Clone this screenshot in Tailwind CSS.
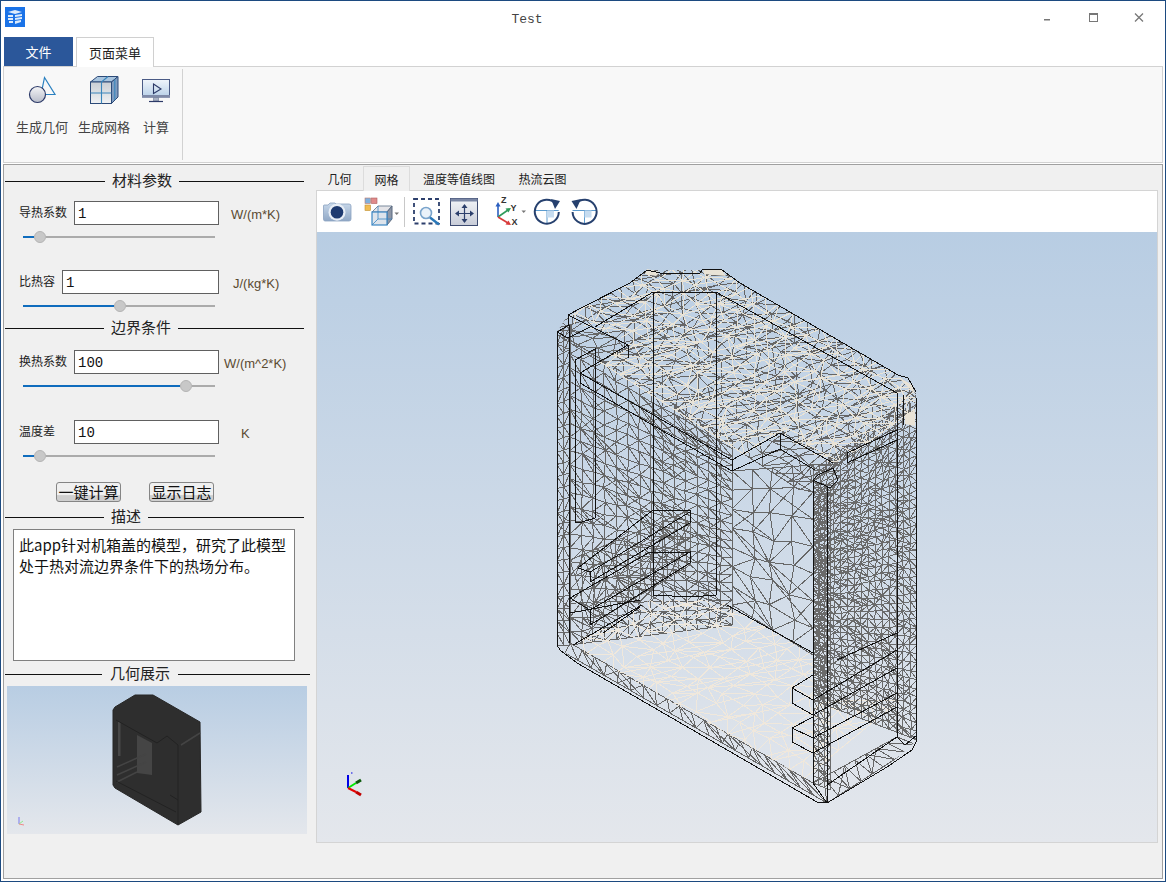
<!DOCTYPE html>
<html lang="zh">
<head>
    <meta charset="UTF-8">
    <title>Test</title>
    <script src="https://cdn.jsdelivr.net/npm/@tailwindcss/browser@4"></script>
</head>
<body class="m-0 bg-white">
<div class="w-[1166px] h-[882px] overflow-hidden border border-[#1c4a80] bg-white flex flex-col font-['Noto_Sans_CJK_SC','Noto_Sans',sans-serif] text-[#222]">

    <!-- title bar -->
    <div class="h-[36px] shrink-0 flex items-center">
        <svg class="w-[20px] h-[20px] ml-[4px] mb-[4px]" viewBox="0 0 20 20">
            <rect width="20" height="20" fill="#1a73e8"/>
            <path d="M3 5 L10 3 L17 5 L10 7 Z M3 8 h5 v2 h-5 Z M10 8 L17 7 v2 L10 10 Z M3 11 h5 v2 h-5 Z M10 11 L17 10 v2 L10 13 Z M4 14 h4 v2 h-4 Z M10 14 L16 13 v2 L10 17 Z" fill="#dcebfb"/>
        </svg>
        <div class="flex-1 text-center pl-[5px] pt-[2px] font-['Liberation_Mono',monospace] text-[13px] text-[#444]">Test</div>
        <div class="flex items-center">
            <svg class="w-[46px] h-[20px]" viewBox="0 0 46 20"><rect x="20" y="10" width="6" height="1.5" fill="#777"/></svg>
            <svg class="w-[46px] h-[20px]" viewBox="0 0 46 20"><rect x="19.5" y="4.5" width="8" height="8" fill="none" stroke="#777"/><rect x="19" y="4" width="9" height="2" fill="#777"/></svg>
            <svg class="w-[46px] h-[20px] mr-[3px]" viewBox="0 0 46 20"><path d="M19 4.5 L27 12.5 M27 4.5 L19 12.5" stroke="#777" stroke-width="1.3"/></svg>
        </div>
    </div>

    <!-- ribbon tabs -->
    <div class="h-[29px] shrink-0 flex pl-[3px] text-[13px]">
        <div class="w-[69px] h-[29px] bg-[#2b579a] text-white flex items-center justify-center">文件</div>
        <div class="w-[78px] h-[30px] ml-[3px] bg-white border border-b-0 border-[#d0d0d0] flex items-center justify-center relative z-10">页面菜单</div>
    </div>

    <!-- ribbon -->
    <div class="h-[97px] shrink-0 ml-[2px] mr-[2px] border border-[#d2d2d2] bg-[#f8f8f8] flex text-[13px] text-[#444]">
        <div class="w-[60px] ml-[8px] mt-[5px] flex flex-col items-center">
            <svg class="w-[60px] h-[36px]" viewBox="12 72 60 36">
                <defs>
                    <linearGradient id="ballFill" x1="0" y1="0" x2="0" y2="1"><stop offset="0" stop-color="#f4f4f6"/><stop offset="1" stop-color="#b8bdca"/></linearGradient>
                    <linearGradient id="cubeFill" x1="0" y1="0" x2="0" y2="1"><stop offset="0" stop-color="#c9ced4"/><stop offset="1" stop-color="#f0f2f4"/></linearGradient>
                    <linearGradient id="screenFill" x1="0" y1="0" x2="0" y2="1"><stop offset="0" stop-color="#f0f5fb"/><stop offset="1" stop-color="#b8d0e8"/></linearGradient>
                    <linearGradient id="camFill" x1="0" y1="0" x2="0" y2="1"><stop offset="0" stop-color="#c8d8ea"/><stop offset="1" stop-color="#90a8c6"/></linearGradient>
                    <linearGradient id="fitFill" x1="0" y1="0" x2="0" y2="1"><stop offset="0" stop-color="#f2f4f8"/><stop offset="1" stop-color="#c8ccd8"/></linearGradient>
                </defs>
                <path d="M44.5 77.5 L55 94.5 L41 94.5 Z" fill="#f8f8f8" stroke="#2a80c0" stroke-width="1.2"/>
                <circle cx="37.5" cy="94.5" r="8" fill="url(#ballFill)" stroke="#2c3a68" stroke-width="1.2"/>
            </svg>
            <div class="mt-[10px] leading-[18px] whitespace-nowrap">生成几何</div>
        </div>
        <div class="w-[60px] ml-[2px] mt-[5px] flex flex-col items-center">
            <svg class="w-[60px] h-[36px]" viewBox="74 72 60 36">
                <path d="M90.5 82 L97.5 76.5 L118 76.5 L111.5 82 Z" fill="#a8c4de" stroke="#2c4a78"/>
                <path d="M111.5 82 L118 76.5 L118 97 L111.5 103.5 Z" fill="#7e9cc0" stroke="#2c4a78"/>
                <rect x="90.5" y="82" width="21" height="21.5" fill="url(#cubeFill)" stroke="#2c4a78"/>
                <path d="M101.5 82 V103.5 M90.5 93 H111.5 M101.5 82 L108 76.5 M114.8 79.5 V100" stroke="#3a86bc" stroke-width="1.1" fill="none"/>
            </svg>
            <div class="mt-[10px] leading-[18px] whitespace-nowrap">生成网格</div>
        </div>
        <div class="w-[40px] ml-[2px] mt-[5px] flex flex-col items-center">
            <svg class="w-[40px] h-[36px]" viewBox="136 72 40 36">
                <rect x="142.5" y="79.5" width="27" height="17.5" fill="url(#screenFill)" stroke="#4a5a85"/>
                <rect x="142" y="95" width="28" height="2.5" fill="#7f8aa8"/>
                <path d="M153.5 84 L161 89 L153.5 93.5 Z" fill="none" stroke="#2c3a68" stroke-width="1.1"/>
                <path d="M153.5 97.5 H158.5 V101 H153.5 Z" fill="#aab2c4" stroke="#6a7590" stroke-width="0.6"/>
                <path d="M149 101.5 H163" stroke="#2c3a68" stroke-width="1.2"/>
            </svg>
            <div class="mt-[10px] leading-[18px] whitespace-nowrap">计算</div>
        </div>
        <div class="w-px ml-[6px] my-[2px] bg-[#d2d2d2]"></div>
    </div>

    <!-- main frame -->
    <div class="h-[715px] shrink-0 mt-px ml-[2px] mr-[2px] border border-[#a0a0a0] bg-[#f0f0f0] flex">

        <!-- left column -->
        <div class="w-[312px] shrink-0 pt-[7px] text-[#222]">
            <div class="h-[18px] flex items-center pl-px text-[15px]">
                <div class="w-[100px] h-px bg-[#111]"></div>
                <div class="w-[74px] pb-[2px] text-center whitespace-nowrap">材料参数</div>
                <div class="w-[125px] h-px bg-[#111]"></div>
            </div>
            <div class="mt-[11px] h-[24px] flex items-center pl-[15px] text-[12px]">
                <div class="w-[55px] pb-[2px] whitespace-nowrap">导热系数</div>
                <input class="w-[145px] h-[24px] border border-[#606060] bg-white px-[3px] pt-[2px] font-['Liberation_Mono',monospace] text-[14px] text-[#111]" value="1">
                <div class="ml-[12px] pt-[4px] font-['Liberation_Sans',sans-serif] text-[13px] text-[#5a4a30]">W/(m*K)</div>
            </div>
            <div class="mt-[6px] h-[12px] ml-[19px] w-[192px] flex items-center">
                <div class="w-[11px] h-[2px] bg-[#0f6cbd]"></div>
                <div class="w-[12px] h-[12px] rounded-full bg-[#c8c8c8] border border-[#b4b4b4] shrink-0"></div>
                <div class="flex-1 h-[2px] bg-[#ababab]"></div>
            </div>

            <div class="mt-[27px] h-[24px] flex items-center pl-[15px] text-[12px]">
                <div class="w-[43px] pb-[2px] whitespace-nowrap">比热容</div>
                <input class="w-[157px] h-[24px] border border-[#606060] bg-white px-[3px] pt-[2px] font-['Liberation_Mono',monospace] text-[14px] text-[#111]" value="1">
                <div class="ml-[14px] pt-[4px] font-['Liberation_Sans',sans-serif] text-[13px] text-[#5a4a30]">J/(kg*K)</div>
            </div>
            <div class="mt-[6px] h-[12px] ml-[19px] w-[192px] flex items-center">
                <div class="w-[91px] h-[2px] bg-[#0f6cbd]"></div>
                <div class="w-[12px] h-[12px] rounded-full bg-[#c8c8c8] border border-[#b4b4b4] shrink-0"></div>
                <div class="flex-1 h-[2px] bg-[#ababab]"></div>
            </div>

            <div class="mt-[7px] h-[18px] flex items-center pl-px text-[15px]">
                <div class="w-[99px] h-px bg-[#111]"></div>
                <div class="w-[74px] pb-[2px] text-center whitespace-nowrap">边界条件</div>
                <div class="w-[126px] h-px bg-[#111]"></div>
            </div>
            <div class="mt-[13px] h-[24px] flex items-center pl-[15px] text-[12px]">
                <div class="w-[55px] pb-[2px] whitespace-nowrap">换热系数</div>
                <input class="w-[145px] h-[24px] border border-[#606060] bg-white px-[3px] pt-[2px] font-['Liberation_Mono',monospace] text-[14px] text-[#111]" value="100">
                <div class="ml-[5px] pt-[4px] font-['Liberation_Sans',sans-serif] text-[13px] text-[#5a4a30] whitespace-nowrap">W/(m^2*K)</div>
            </div>
            <div class="mt-[6px] h-[12px] ml-[19px] w-[192px] flex items-center">
                <div class="w-[157px] h-[2px] bg-[#0f6cbd]"></div>
                <div class="w-[12px] h-[12px] rounded-full bg-[#c8c8c8] border border-[#b4b4b4] shrink-0"></div>
                <div class="flex-1 h-[2px] bg-[#ababab]"></div>
            </div>

            <div class="mt-[28px] h-[24px] flex items-center pl-[15px] text-[12px]">
                <div class="w-[55px] pb-[2px] whitespace-nowrap">温度差</div>
                <input class="w-[145px] h-[24px] border border-[#606060] bg-white px-[3px] pt-[2px] font-['Liberation_Mono',monospace] text-[14px] text-[#111]" value="10">
                <div class="ml-[22px] pt-[4px] font-['Liberation_Sans',sans-serif] text-[13px] text-[#5a4a30]">K</div>
            </div>
            <div class="mt-[6px] h-[12px] ml-[19px] w-[192px] flex items-center">
                <div class="w-[11px] h-[2px] bg-[#0f6cbd]"></div>
                <div class="w-[12px] h-[12px] rounded-full bg-[#c8c8c8] border border-[#b4b4b4] shrink-0"></div>
                <div class="flex-1 h-[2px] bg-[#ababab]"></div>
            </div>

            <div class="mt-[20px] h-[20px] flex pl-[52px] text-[15px] text-[#111]">
                <button class="w-[65px] h-[20px] rounded-[3px] border border-[#858585] bg-linear-to-b from-[#f0f0f0] from-[65%] to-[#cfcfcf] to-[70%] leading-[18px] whitespace-nowrap">一键计算</button>
                <button class="w-[65px] h-[20px] ml-[28px] rounded-[3px] border border-[#858585] bg-linear-to-b from-[#f0f0f0] from-[65%] to-[#cfcfcf] to-[70%] leading-[18px] whitespace-nowrap">显示日志</button>
            </div>

            <div class="mt-[6px] h-[18px] flex items-center pl-px text-[15px]">
                <div class="w-[99px] h-px bg-[#111]"></div>
                <div class="w-[44px] pb-[2px] text-center whitespace-nowrap">描述</div>
                <div class="w-[156px] h-px bg-[#111]"></div>
            </div>
            <textarea class="block mt-[3px] ml-[9px] w-[282px] h-[132px] resize-none overflow-hidden border border-[#808080] bg-white px-[5px] pt-[4px] text-[15px] leading-[21px] text-[#111]">此app针对机箱盖的模型，研究了此模型处于热对流边界条件下的热场分布。</textarea>

            <div class="mt-[4px] h-[18px] flex items-center pl-px text-[15px]">
                <div class="w-[97px] h-px bg-[#111]"></div>
                <div class="w-[76px] pb-[2px] text-center whitespace-nowrap">几何展示</div>
                <div class="w-[132px] h-px bg-[#111]"></div>
            </div>
            <div class="mt-[3px] ml-[3px] w-[300px] h-[148px] bg-linear-to-b from-[#b8cde3] to-[#e4e7ec]">
                <svg class="block w-[300px] h-[148px]" viewBox="7 686 300 148">
                    <path d="M115 707 L135 695 L153 695 L200 722 L201 812 L178 825 L115 788 L113 785 L113 710 Z" fill="#2e2e2e" stroke="#262626"/>
                    <path d="M137 735 L152 743 L152 775 L137 773 Z" fill="#454545"/>
                    <path d="M118 722 H120.5 V756 H118 Z" fill="#484848"/>
                    <path d="M117 767 L146 754 M117 775 L146 762 M117 782 L137 772 M181 745 L200 733" stroke="#444" stroke-width="1.5" fill="none"/>
                    <path d="M116 720 L157 743 L167 736 L178 745 M178 745 V825 M116 781 L176 812 M170 795 L178 800" stroke="#222" fill="none"/>
                    <path d="M19 817 V824" stroke="#8a8aee" stroke-width="1.2" fill="none"/>
                    <path d="M19 824 L23 821" stroke="#8aee8a" stroke-width="1" fill="none"/>
                    <path d="M19 824 L24 825" stroke="#ee8a8a" stroke-width="1" fill="none"/>
                </svg>
            </div>
        </div>

        <!-- right column -->
        <div class="w-[842px] shrink-0 flex flex-col">
            <div class="h-[25px] shrink-0 flex items-end text-[12px] text-[#222]">
                <div class="w-[47px] h-[22px] flex items-center justify-center">几何</div>
                <div class="w-[47px] h-[25px] -mb-px relative z-10 bg-[#f0f0f0] border border-b-0 border-[#dcdcdc] flex items-center justify-center pt-[1px]">网格</div>
                <div class="w-[98px] h-[22px] flex items-center justify-center whitespace-nowrap">温度等值线图</div>
                <div class="w-[69px] h-[22px] flex items-center justify-center whitespace-nowrap">热流云图</div>
            </div>
            <div class="h-[653px] shrink-0 border border-[#d4d4d4] flex flex-col">
                <!-- toolbar -->
                <div class="h-[41px] shrink-0 bg-white flex items-center pl-[5px]">
                    <svg class="w-[30px] h-[26px]" viewBox="322 200 30 26">
                        <path d="M324 206 H328 L330 204 H335 L336 205 H349 Q351 205 351 207 V220 Q351 222 349 222 H325 Q323.5 222 323.5 220 V207 Q323.5 206 324 206 Z" fill="url(#camFill)" stroke="#8ba2c0" stroke-width="0.8"/>
                        <circle cx="337" cy="213.3" r="8.5" fill="#e8eef6"/>
                        <circle cx="337" cy="213.3" r="6.3" fill="#1e3a70"/>
                    </svg>
                    <svg class="w-[38px] h-[32px] ml-[11px]" viewBox="364 196 38 32">
                        <rect x="366" y="198" width="5.5" height="5.5" fill="#7fb0de" stroke="#c07a6a" stroke-width="0.6"/>
                        <rect x="372.5" y="198" width="5.5" height="5.5" fill="#e08a8a" stroke="#b06060" stroke-width="0.6"/>
                        <rect x="366" y="205" width="5.5" height="5.5" fill="#f2bc52" stroke="#c09030" stroke-width="0.6"/>
                        <path d="M379 206 H393 L388 212 H373 Z" fill="#e4e4e8" stroke="#7a8a9c"/>
                        <path d="M393 206 V219 L388 225 V212 Z" fill="#8d96a6" stroke="#5a6a80"/>
                        <rect x="373" y="212" width="15" height="13" fill="#dde4ec" stroke="#3a86c4" stroke-width="1.2"/>
                        <path d="M379 206 V219 H393 M379 219 L373 225" fill="none" stroke="#3a86c4" stroke-width="0.8"/>
                        <path d="M395.5 212.5 H400 L397.7 215 Z" fill="#777"/>
                    </svg>
                    <div class="w-px h-[30px] ml-[3px] bg-[#c8c8c8]"></div>
                    <svg class="w-[30px] h-[30px] ml-[7px]" viewBox="412 197 30 30">
                        <rect x="414" y="199" width="25" height="24.5" fill="none" stroke="#2c3f6c" stroke-width="1.8" stroke-dasharray="4 3"/>
                        <circle cx="426" cy="213" r="5.5" fill="#eaf2fa" stroke="#7aa4cc" stroke-width="1.6"/>
                        <path d="M430 217.5 L439 224.5" stroke="#2a78b8" stroke-width="2.4"/>
                    </svg>
                    <svg class="w-[30px] h-[30px] ml-[7px]" viewBox="449 197 30 30">
                        <rect x="450.5" y="198.5" width="27" height="27" fill="url(#fitFill)" stroke="#3c4a70"/>
                        <rect x="450.5" y="198.5" width="27" height="3" fill="#7a86a4"/>
                        <path d="M464.5 205 V222 M456 213.5 H473" stroke="#2c3f6c" stroke-width="1.2"/>
                        <path d="M464.5 204 L467.5 208 H461.5 Z M464.5 223 L467.5 219 H461.5 Z M455 213.5 L459 210.5 V216.5 Z M474 213.5 L470 210.5 V216.5 Z" fill="#2c3f6c"/>
                    </svg>
                    <svg class="w-[33px] h-[32px] ml-[16px]" viewBox="495 197 33 32">
                        <path d="M498 218 V206" stroke="#2a5fc0" stroke-width="1.6"/>
                        <path d="M498 203 L500.5 207.5 H495.5 Z" fill="#2a5fc0"/>
                        <path d="M498 218 L508 211" stroke="#2f9a5a" stroke-width="1.6"/>
                        <path d="M511 209 L505.5 209.5 L508.5 213.5 Z" fill="#2f9a5a"/>
                        <path d="M498 218 L508 224" stroke="#d83a3a" stroke-width="1.6"/>
                        <path d="M511 226 L505.5 225.5 L508.5 221.5 Z" fill="#d83a3a"/>
                        <text x="501" y="204" font-size="9" font-weight="bold" font-family="Liberation Sans" fill="#333">Z</text>
                        <text x="510.5" y="212" font-size="9" font-weight="bold" font-family="Liberation Sans" fill="#333">Y</text>
                        <text x="511.5" y="226" font-size="9" font-weight="bold" font-family="Liberation Sans" fill="#333">X</text>
                        <path d="M521.5 211.5 H526 L523.7 214 Z" fill="#777"/>
                    </svg>
                    <svg class="w-[28px] h-[28px] ml-[5px]" viewBox="533 199 28 28">
                        <path d="M534.7 211.5 H558.7 M547 211.5 V225" fill="none" stroke="#4a90c8" stroke-width="0.9"/>
                        <rect x="547" y="211.5" width="7" height="7" fill="#c6dcf0"/>
                        <path d="M556 205 A12 12 0 1 0 558.8 213" fill="none" stroke="#26406e" stroke-width="2"/>
                        <path d="M551 200 L560 202 L555 210 Z" fill="#26406e"/>
                    </svg>
                    <svg class="w-[28px] h-[28px] ml-[9px]" viewBox="570 199 28 28">
                        <path d="M572.5 211.5 H596.5 M584.5 211.5 V225" fill="none" stroke="#4a90c8" stroke-width="0.9"/>
                        <rect x="584.5" y="211.5" width="7" height="7" fill="#c6dcf0"/>
                        <path d="M575.5 205 A12 12 0 1 1 572.6 213" fill="none" stroke="#26406e" stroke-width="2"/>
                        <path d="M581 200 L571.5 202 L576.5 210 Z" fill="#26406e"/>
                    </svg>
                </div>
                <!-- 3D viewport -->
                <div class="h-[610px] shrink-0 bg-linear-to-b from-[#b8cde3] to-[#e4e7ec]">
                    <svg class="block w-[840px] h-[610px]" viewBox="317 232 840 610">
                        <defs>
                            <clipPath id="topClip"><polygon points="568,315 583,307 630,283 647,270 722,270 740,283 898,375 913,387 917,410 897,432 847,455 833,465 780,435 732,462 732,472 580,384 580,372 628,345 628,340 568,322"/></clipPath>
                            <clipPath id="floorClip"><polygon points="571,645 642,605 650,600 720,600 813,655 813,700 900,700 900,735 827,790 813,783"/></clipPath>
                            <clipPath id="outlineClip"><polygon points="568,315 583,307 630,283 647,270 722,270 740,283 898,375 916,392 917,740 887,767 827,803 817,802 577,663 557,645 557,332"/></clipPath>
                        </defs>
                        <g clip-path="url(#outlineClip)" fill="none" shape-rendering="crispEdges">
                            <path id="meshGray" stroke="#666" stroke-width="1"/>
                            <path id="meshFloor" stroke="#f0e8dc" stroke-width="1" clip-path="url(#floorClip)"/>
                            <path id="meshGrayFine" stroke="#6a6a6a" stroke-width="1"/>
                            <path id="meshTop" stroke="#e9e3d6" stroke-width="1" clip-path="url(#topClip)"/>
                        </g>
                        <path fill="#e9e3d6" d="M647 269 L660 272 L656 276 L645 274 Z M703 269 L722 270 L726 276 L704 274 Z M905 415 L915 410 L915 426 L905 424 Z M897 376 L912 385 L915 394 L905 384 Z"/>
                        <path fill="none" stroke="#111" stroke-width="1" shape-rendering="crispEdges" d="
                            M568 315 L583 307 L630 283 L647 270 L660 273 L700 273 L703 269 L722 270 L740 283 L898 375 L908 378 L916 392 L917 740 L912 750 L887 767 L827 803 L817 802 L577 663 L560 650 L557 645 L557 332 L569 325 Z
                            M569 325 V643 M557 332 L568 338 L590 327 M568 315 L628 345 V358
                            M575 360 L595 349 V518 L582 522 H575 Z
                            M580 373 L628 345 M580 373 L732 460 M580 383 L732 471 M580 373 V383 M732 460 V471 M732 460 L780 433 M732 471 L780 449 M780 433 V449
                            M780 433 L833 463 M780 449 L815 470 M813 480 L818 475 L833 468 L838 480 L830 488 L813 480
                            M847 453 L897 430 M847 453 V463 L897 440
                            M897 393 V737 M813 480 V783 M827 487 V803 M813 783 L827 803 M827 785 L897 737
                            M653 292 V595 M716 292 V595 M653 292 H716 M653 595 L690 597 L716 595 M595 327 L653 292 M716 292 L897 393
                            M578 568 L653 510 H690 V523 L590 582 V572 L690 512 M578 568 L590 572
                            M570 598 L590 610 L690 552 V563 L590 625 V610 M570 598 L650 552 H690
                            M570 613 L640 600 M640 607 L603 633 M573 645 L642 605 M727 605 L813 653
                            M792 688 L813 675 M792 688 L813 700 M792 688 V703 L813 715 M813 700 L897 650 M813 715 L897 668
                            M792 728 L813 717 M792 728 V742 L813 753 M792 728 L813 738 M813 738 L897 693 M813 753 L897 707
                            M837 660 L897 633 M897 737 L905 745 L917 735 M903 395 V425"/>
                        <g fill="none" stroke-width="2">
                            <path d="M348 788 V775" stroke="#0000e6"/>
                            <path d="M348 788 L356 783" stroke="#00e600"/>
                            <path d="M356 783 L361 780" stroke="#0a5a0a" stroke-width="3"/>
                            <path d="M348 788 L356 792" stroke="#e60000"/>
                            <path d="M356 792 L361 795" stroke="#c00000" stroke-width="3"/>
                            <path d="M351 773 h1.5" stroke="#0000e6" stroke-width="1"/>
                        </g>
                    </svg>
                </div>
            </div>
        </div>
    </div>
</div>

<script>
    // seeded so the mesh comes out the same on every load
    let seed = 7;
    function rnd() {
        seed = (seed * 16807) % 2147483647;
        return (seed - 1) / 2147483646;
    }

    function quadMesh(a, b, c, d, nu, nv, jitter) {
        const pts = [];
        for (let i = 0; i <= nu; i++) {
            pts[i] = [];
            for (let j = 0; j <= nv; j++) {
                const inner = i > 0 && i < nu && j > 0 && j < nv;
                const u = (i + (inner ? (rnd() - 0.5) * jitter : 0)) / nu;
                const v = (j + (inner ? (rnd() - 0.5) * jitter : 0)) / nv;
                pts[i][j] = [
                    (1 - u) * (1 - v) * a[0] + u * (1 - v) * b[0] + u * v * c[0] + (1 - u) * v * d[0],
                    (1 - u) * (1 - v) * a[1] + u * (1 - v) * b[1] + u * v * c[1] + (1 - u) * v * d[1]
                ];
            }
        }
        const seg = (p, q) => `M${p[0].toFixed(1)} ${p[1].toFixed(1)}L${q[0].toFixed(1)} ${q[1].toFixed(1)}`;
        let out = '';
        for (let i = 0; i <= nu; i++) {
            for (let j = 0; j <= nv; j++) {
                if (i < nu) out += seg(pts[i][j], pts[i + 1][j]);
                if (j < nv) out += seg(pts[i][j], pts[i][j + 1]);
                if (i < nu && j < nv) {
                    out += rnd() > 0.5 ? seg(pts[i][j], pts[i + 1][j + 1]) : seg(pts[i + 1][j], pts[i][j + 1]);
                    // longer struts give the fan shapes a free mesher leaves
                    if (i + 2 <= nu && j + 1 <= nv && rnd() > 0.7) out += seg(pts[i][j], pts[i + 2][j + 1]);
                }
            }
        }
        return out;
    }

    document.getElementById('meshGray').setAttribute('d',
        quadMesh([557, 332], [570, 325], [570, 645], [557, 645], 2, 26, 0.1) +
        quadMesh([570, 340], [732, 440], [732, 625], [570, 645], 14, 22, 0.2) +
        quadMesh([732, 471], [813, 465], [813, 655], [732, 605], 4, 7, 0.35) +
        quadMesh([550, 330], [680, 245], [935, 395], [800, 490], 11, 20, 0.5) +
        quadMesh([570, 643], [813, 783], [827, 803], [565, 653], 20, 1, 0.1) +
        quadMesh([827, 803], [917, 745], [897, 737], [813, 783], 8, 1, 0.1)
    );
    document.getElementById('meshGrayFine').setAttribute('d',
        quadMesh([813, 470], [917, 395], [917, 740], [813, 700], 15, 40, 0.3) +
        quadMesh([813, 480], [830, 488], [830, 790], [813, 783], 3, 40, 0.2) +
        quadMesh([570, 560], [690, 510], [690, 565], [590, 625], 9, 4, 0.2)
    );
    document.getElementById('meshTop').setAttribute('d',
        quadMesh([550, 330], [680, 245], [935, 395], [800, 490], 10, 18, 0.55)
    );
    document.getElementById('meshFloor').setAttribute('d',
        quadMesh([570, 645], [685, 575], [900, 700], [790, 790], 9, 15, 0.45)
    );
</script>
</body>
</html>
